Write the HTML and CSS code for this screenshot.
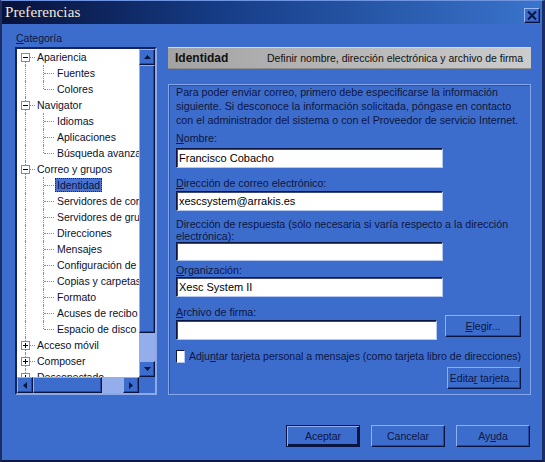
FILE: index.html
```html
<!DOCTYPE html>
<html lang="es">
<head>
<meta charset="utf-8">
<title>Preferencias</title>
<link rel="stylesheet" href="styles.css">
</head>
<body>
<div class="win">
  <div class="titlebar">
    <span class="title">Preferencias</span>
    <span class="close"><svg width="10" height="9" viewBox="0 0 10 9"><path d="M1 0.5 L9 8.5 M9 0.5 L1 8.5" stroke="#0a1440" stroke-width="2"/></svg></span>
  </div>
  <div class="content">
    <div class="main">
      <div class="left">
        <div class="cat-label"><u>C</u>ategoría</div>
        <div class="tree">
          <div class="tree-top">
            <div class="tree-list">
              <div class="row top first"><span class="c1"><span class="box"></span></span><span class="t">Apariencia</span></div>
              <div class="row child"><span class="c1"></span><span class="c2"></span><span class="t">Fuentes</span></div>
              <div class="row child last"><span class="c1"></span><span class="c2"></span><span class="t">Colores</span></div>
              <div class="row top"><span class="c1"><span class="box"></span></span><span class="t">Navigator</span></div>
              <div class="row child"><span class="c1"></span><span class="c2"></span><span class="t">Idiomas</span></div>
              <div class="row child"><span class="c1"></span><span class="c2"></span><span class="t">Aplicaciones</span></div>
              <div class="row child last"><span class="c1"></span><span class="c2"></span><span class="t">Búsqueda avanzada</span></div>
              <div class="row top"><span class="c1"><span class="box"></span></span><span class="t">Correo y grupos</span></div>
              <div class="row child"><span class="c1"></span><span class="c2"></span><span class="t sel">Identidad</span></div>
              <div class="row child"><span class="c1"></span><span class="c2"></span><span class="t">Servidores de correo</span></div>
              <div class="row child"><span class="c1"></span><span class="c2"></span><span class="t">Servidores de grupos de noticias</span></div>
              <div class="row child"><span class="c1"></span><span class="c2"></span><span class="t">Direcciones</span></div>
              <div class="row child"><span class="c1"></span><span class="c2"></span><span class="t">Mensajes</span></div>
              <div class="row child"><span class="c1"></span><span class="c2"></span><span class="t">Configuración de ventanas</span></div>
              <div class="row child"><span class="c1"></span><span class="c2"></span><span class="t">Copias y carpetas</span></div>
              <div class="row child"><span class="c1"></span><span class="c2"></span><span class="t">Formato</span></div>
              <div class="row child"><span class="c1"></span><span class="c2"></span><span class="t">Acuses de recibo</span></div>
              <div class="row child last"><span class="c1"></span><span class="c2"></span><span class="t">Espacio de disco</span></div>
              <div class="row top"><span class="c1"><span class="box plus"></span></span><span class="t">Acceso móvil</span></div>
              <div class="row top"><span class="c1"><span class="box plus"></span></span><span class="t">Composer</span></div>
              <div class="row top"><span class="c1"><span class="box plus"></span></span><span class="t">Desconectado</span></div>
              <div class="row top"><span class="c1"><span class="box plus"></span></span><span class="t">Avanzadas</span></div>
            </div>
            <div class="vscroll">
              <div class="sb"><svg width="7" height="4" viewBox="0 0 7 4"><path d="M3.5 0 L7 4 L0 4 Z" fill="#0a1440"/></svg></div>
              <div class="thumb v"></div>
              <div class="track"></div>
              <div class="sb"><svg width="7" height="4" viewBox="0 0 7 4"><path d="M0 0 L7 0 L3.5 4 Z" fill="#0a1440"/></svg></div>
            </div>
          </div>
          <div class="hscroll">
            <div class="sb"><svg width="4" height="7" viewBox="0 0 4 7"><path d="M4 0 L4 7 L0 3.5 Z" fill="#0a1440"/></svg></div>
            <div class="thumb h"></div>
            <div class="track"></div>
            <div class="sb"><svg width="4" height="7" viewBox="0 0 4 7"><path d="M0 0 L4 3.5 L0 7 Z" fill="#0a1440"/></svg></div>
            <div class="corner"></div>
          </div>
        </div>
      </div>
      <div class="right">
        <div class="header"><b class="h-title">Identidad</b><span class="h-desc">Definir nombre, dirección electrónica y archivo de firma</span></div>
        <div class="group">
          <p class="para">Para poder enviar correo, primero debe especificarse la información<br>siguiente. Si desconoce la información solicitada, póngase en contacto<br>con el administrador del sistema o con el Proveedor de servicio Internet.</p>
          <label class="lbl l-nombre"><u>N</u>ombre:</label>
          <input class="field f-nombre" type="text" value="Francisco Cobacho">
          <label class="lbl l-correo"><u>D</u>irección de correo electrónico:</label>
          <input class="field f-correo" type="text" value="xescsystem@arrakis.es">
          <label class="lbl l-resp">Dirección de respuesta (sólo necesaria si varía respecto a la dirección<br>electrónica):</label>
          <input class="field f-resp" type="text" value="">
          <label class="lbl l-org"><u>O</u>rganización:</label>
          <input class="field f-org" type="text" value="Xesc System II">
          <div class="sig-row">
            <div class="sig-col">
              <label class="lbl l-sig"><u>A</u>rchivo de firma:</label>
              <input class="field f-sig" type="text" value="">
            </div>
            <button class="btn b-elegir"><u>E</u>legir...</button>
          </div>
          <div class="chk-row"><span class="chk"></span><span class="chk-lbl">Adju<u>n</u>tar tarjeta personal a mensajes (como tarjeta libro de direcciones)</span></div>
          <div class="edit-row"><button class="btn b-edit">Edita<u>r</u> tarjeta...</button></div>
        </div>
      </div>
    </div>
    <div class="footer">
      <button class="btn default">Aceptar</button>
      <button class="btn">Cancelar</button>
      <button class="btn">Ay<u>u</u>da</button>
    </div>
  </div>
</div>
</body>
</html>
```
FILE: styles.css
```css
* { box-sizing: border-box; }
html, body { margin: 0; padding: 0; }
body {
  width: 545px;
  height: 462px;
  overflow: hidden;
  background: #3d6dcc;
  font-family: "Liberation Sans", Arial, sans-serif;
  color: #0d1642;
}
.win {
  width: 545px;
  height: 462px;
  background: #3d6dcc;
  border-top: 1px solid #6f95e0;
  border-left: 2px solid #1c2c64;
  border-right: 3px solid #1c2c64;
  border-bottom: 2px solid #0f1a44;
  display: flex;
  flex-direction: column;
}
.titlebar {
  height: 23px;
  flex: 0 0 23px;
  background: linear-gradient(to right, #07113a 0%, #163c86 40%, #3a74cc 100%);
  display: flex;
  align-items: center;
  justify-content: space-between;
  padding: 0 2px 0 3px;
}
.title {
  font-family: "Liberation Serif", "Times New Roman", serif;
  font-size: 15px;
  color: #f2ead8;
  letter-spacing: 0.1px;
}
.close {
  width: 16px;
  height: 15px;
  margin-top: 5px;
  background: #3d6dcc;
  border: 1px solid;
  border-color: #9ab8f2 #0a1440 #0a1440 #9ab8f2;
  box-shadow: inset -1px -1px #27489a;
  display: flex;
  align-items: center;
  justify-content: center;
}
.content {
  flex: 1;
  padding: 7px 11px 0 13px;
  display: flex;
  flex-direction: column;
}
.main {
  display: flex;
  gap: 11px;
}
.left { width: 142px; flex: 0 0 142px; }
.cat-label {
  font-size: 10.5px;
  line-height: 14px;
  height: 14px;
  margin-bottom: 2px;
  padding-left: 1px;
}
.tree {
  width: 142px;
  height: 348px;
  border: 2px solid;
  border-color: #14245a #8caae8 #8caae8 #14245a;
  display: flex;
  flex-direction: column;
}
.tree-top { display: flex; height: 328px; }
.tree-list {
  width: 122px;
  height: 328px;
  overflow: hidden;
  background: #ffffff;
  color: #0a0f30;
  font-size: 10.5px;
}
.row {
  height: 16px;
  display: flex;
  align-items: center;
  white-space: nowrap;
}
.c1, .c2 {
  position: relative;
  height: 16px;
  flex: 0 0 auto;
}
.c1 { width: 18px; }
.c2 { width: 20px; }
.c1::before, .c2::before {
  content: "";
  position: absolute;
  left: 8px;
  top: 0;
  bottom: 0;
  border-left: 1px dotted #8a8a8a;
}
.row.first .c1::before { top: 8px; }
.row.child.last .c2::before { bottom: 8px; }
.c2::after {
  content: "";
  position: absolute;
  left: 9px;
  top: 8px;
  width: 10px;
  border-top: 1px dotted #8a8a8a;
}
.row.top .c1::after {
  content: "";
  position: absolute;
  left: 13px;
  top: 8px;
  width: 5px;
  border-top: 1px dotted #8a8a8a;
}
.box {
  position: absolute;
  left: 4px;
  top: 4px;
  width: 9px;
  height: 9px;
  border: 1px solid #8a8a8a;
  background: #ffffff;
  z-index: 1;
}
.box::before {
  content: "";
  position: absolute;
  left: 1px;
  top: 3px;
  width: 5px;
  height: 1px;
  background: #000000;
}
.box.plus::after {
  content: "";
  position: absolute;
  left: 3px;
  top: 1px;
  width: 1px;
  height: 5px;
  background: #000000;
}
.t { padding: 0 2px; line-height: 14px; }
.t.sel {
  background: #4a72d2;
  color: #0a1440;
  outline: 1px dotted #1a2a60;
  outline-offset: -1px;
}
.vscroll {
  width: 16px;
  display: flex;
  flex-direction: column;
}
.sb {
  width: 16px;
  height: 16px;
  flex: 0 0 16px;
  background: #3d6dcc;
  border: 1px solid;
  border-color: #8eb0f0 #0a1440 #0a1440 #8eb0f0;
  box-shadow: inset -1px -1px #27489a;
  display: flex;
  align-items: center;
  justify-content: center;
}
.thumb {
  background: #3d6dcc;
  border: 1px solid;
  border-color: #8eb0f0 #0a1440 #0a1440 #8eb0f0;
  box-shadow: inset -1px -1px #27489a;
}
.thumb.v { height: 268px; flex: 0 0 268px; }
.thumb.h { width: 69px; flex: 0 0 69px; }
.track { flex: 1; background: #93aeea; }
.hscroll { display: flex; height: 16px; }
.corner { width: 16px; flex: 0 0 16px; background: #3d6dcc; }
.right { width: 363px; flex: 0 0 363px; margin-top: 16px; }
.header {
  height: 22px;
  background: linear-gradient(to right, #a3a3a3, #cccccc);
  border-top: 1px solid #d8d8d8;
  border-bottom: 1px solid #8c8c8c;
  display: flex;
  align-items: center;
  padding-left: 7px;
  color: #101010;
  white-space: nowrap;
}
.h-title { width: 92px; font-size: 12px; font-weight: bold; }
.h-desc { font-size: 10.5px; }
.group {
  margin-top: 15px;
  height: 311px;
  border: 1px solid #86a6ea;
  box-shadow: inset 1px 1px #2c50a8;
  padding: 0 9px 0 7px;
  display: flex;
  flex-direction: column;
  font-size: 10.7px;
}
.para {
  margin: 0;
  line-height: 14px;
  white-space: nowrap;
}
.lbl { display: block; line-height: 12px; white-space: nowrap; }
.field {
  display: block;
  height: 20px;
  margin: 0;
  padding: 0 2px;
  background: #ffffff;
  border: 1px solid;
  border-color: #0c1640 #b4c8f4 #b4c8f4 #0c1640;
  box-shadow: inset 1px 1px #404a70;
  font-family: "Liberation Sans", Arial, sans-serif;
  font-size: 11px;
  color: #000000;
  outline: none;
  width: 267px;
}
.l-nombre { margin-top: 5px; }
.f-nombre { margin-top: 4px; }
.l-correo { margin-top: 9px; }
.f-correo { margin-top: 2px; }
.l-resp { margin-top: 7px; }
.f-resp { margin-top: 0; height: 19px; }
.l-org { margin-top: 3px; }
.f-org { margin-top: 1px; }
.sig-row { display: flex; align-items: flex-end; margin-top: 9px; }
.f-sig { margin-top: 2px; width: 261px; }
.btn {
  height: 22px;
  width: 74px;
  padding: 0;
  background: #3d6dcc;
  border: 1px solid;
  border-color: #8eb0f0 #0a1440 #0a1440 #8eb0f0;
  box-shadow: inset -1px -1px #27489a;
  font-family: "Liberation Sans", Arial, sans-serif;
  font-size: 10.5px;
  color: #0d1642;
}
.b-elegir { width: 76px; margin-left: 8px; margin-bottom: 3px; }
.chk-row { display: flex; align-items: center; height: 16px; margin-top: 8px; }
.chk {
  width: 13px;
  height: 13px;
  background: #ffffff;
  border: 1px solid;
  border-color: #0c1640 #b4c8f4 #b4c8f4 #0c1640;
  margin-right: 4px;
}
.chk-lbl { white-space: nowrap; font-size: 10.5px; }
.edit-row { display: flex; justify-content: flex-end; margin-top: 3px; }
.b-edit { width: 74px; }
.footer {
  display: flex;
  justify-content: flex-end;
  gap: 11px;
  margin-top: 30px;
  padding-right: 1px;
}
.btn.default {
  border-color: #0a1440;
  box-shadow: inset 1px 1px #8eb0f0, inset -2px -2px #0a1440;
}
```
